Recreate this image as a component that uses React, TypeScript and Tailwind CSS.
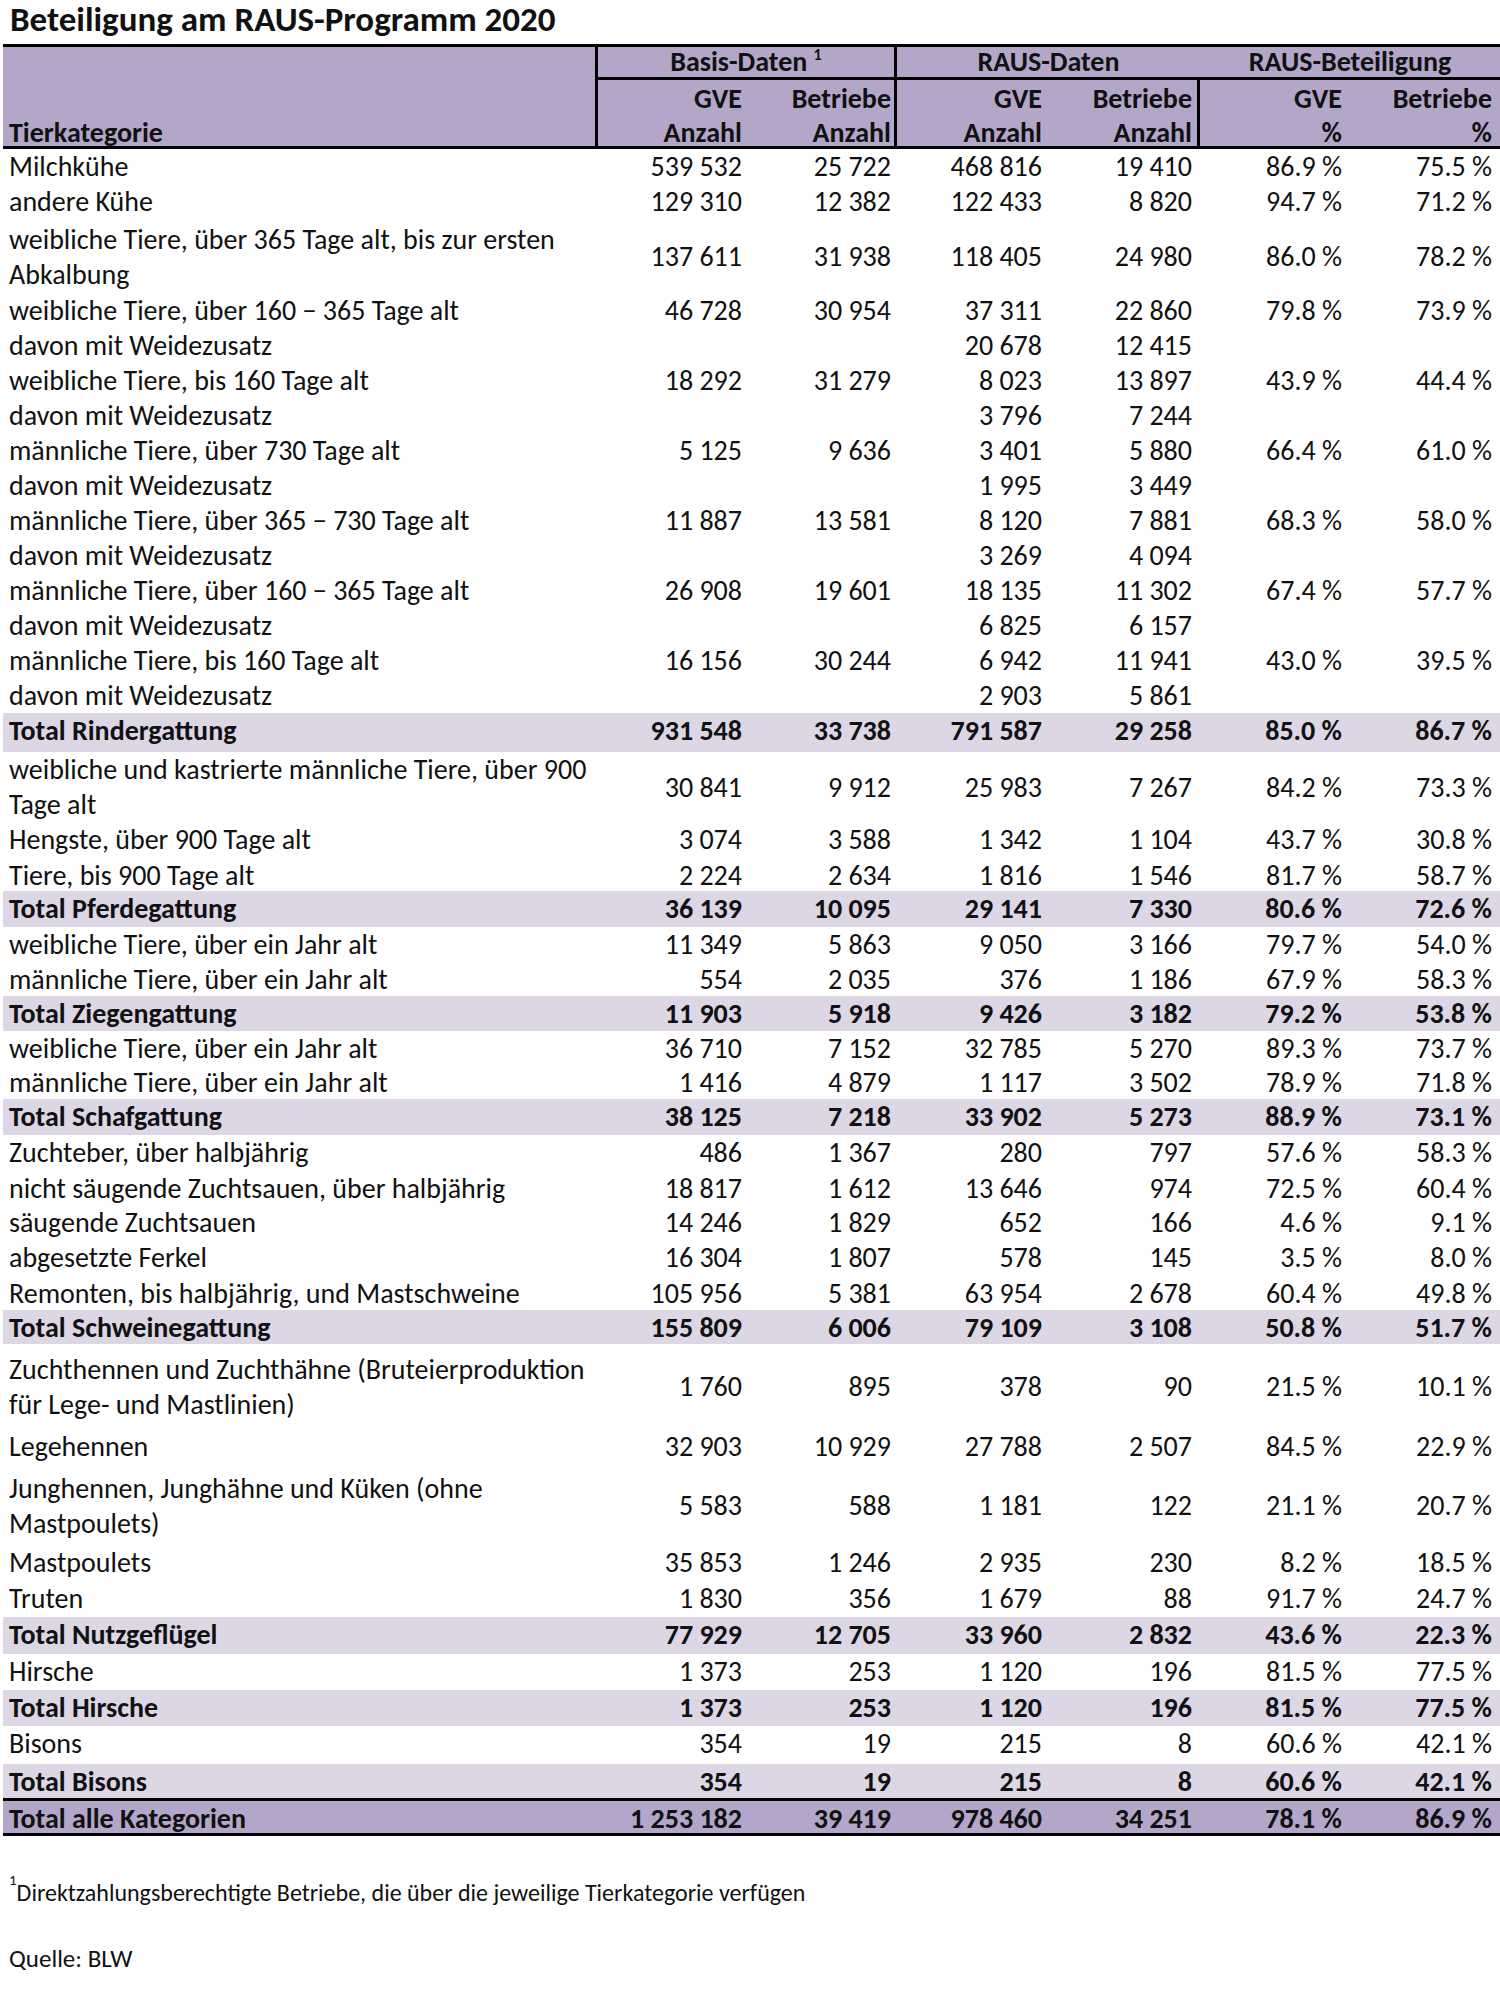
import React from "react"

type Row = {
  label: string
  v: string[]
  kind?: "total" | "grand"
  h?: number
}

const D = "davon mit Weidezusatz"

const rows: Row[] = [
  { label: "Milchkühe", v: ["539 532", "25 722", "468 816", "19 410", "86.9 %", "75.5 %"] },
  { label: "andere Kühe", v: ["129 310", "12 382", "122 433", "8 820", "94.7 %", "71.2 %"], h: 36 },
  { label: "weibliche Tiere, über 365 Tage alt, bis zur ersten\nAbkalbung", v: ["137 611", "31 938", "118 405", "24 980", "86.0 %", "78.2 %"], h: 73 },
  { label: "weibliche Tiere, über 160 − 365 Tage alt", v: ["46 728", "30 954", "37 311", "22 860", "79.8 %", "73.9 %"] },
  { label: D, v: ["", "", "20 678", "12 415", "", ""] },
  { label: "weibliche Tiere, bis 160 Tage alt", v: ["18 292", "31 279", "8 023", "13 897", "43.9 %", "44.4 %"] },
  { label: D, v: ["", "", "3 796", "7 244", "", ""] },
  { label: "männliche Tiere, über 730 Tage alt", v: ["5 125", "9 636", "3 401", "5 880", "66.4 %", "61.0 %"] },
  { label: D, v: ["", "", "1 995", "3 449", "", ""] },
  { label: "männliche Tiere, über 365 − 730 Tage alt", v: ["11 887", "13 581", "8 120", "7 881", "68.3 %", "58.0 %"] },
  { label: D, v: ["", "", "3 269", "4 094", "", ""] },
  { label: "männliche Tiere, über 160 − 365 Tage alt", v: ["26 908", "19 601", "18 135", "11 302", "67.4 %", "57.7 %"] },
  { label: D, v: ["", "", "6 825", "6 157", "", ""] },
  { label: "männliche Tiere, bis 160 Tage alt", v: ["16 156", "30 244", "6 942", "11 941", "43.0 %", "39.5 %"] },
  { label: D, v: ["", "", "2 903", "5 861", "", ""] },
  { label: "Total Rindergattung", v: ["931 548", "33 738", "791 587", "29 258", "85.0 %", "86.7 %"], kind: "total", h: 39 },
  { label: "weibliche und kastrierte männliche Tiere, über 900\nTage alt", v: ["30 841", "9 912", "25 983", "7 267", "84.2 %", "73.3 %"], h: 70 },
  { label: "Hengste, über 900 Tage alt", v: ["3 074", "3 588", "1 342", "1 104", "43.7 %", "30.8 %"], h: 36 },
  { label: "Tiere, bis 900 Tage alt", v: ["2 224", "2 634", "1 816", "1 546", "81.7 %", "58.7 %"], h: 33 },
  { label: "Total Pferdegattung", v: ["36 139", "10 095", "29 141", "7 330", "80.6 %", "72.6 %"], kind: "total", h: 36 },
  { label: "weibliche Tiere, über ein Jahr alt", v: ["11 349", "5 863", "9 050", "3 166", "79.7 %", "54.0 %"] },
  { label: "männliche Tiere, über ein Jahr alt", v: ["554", "2 035", "376", "1 186", "67.9 %", "58.3 %"], h: 34 },
  { label: "Total Ziegengattung", v: ["11 903", "5 918", "9 426", "3 182", "79.2 %", "53.8 %"], kind: "total" },
  { label: "weibliche Tiere, über ein Jahr alt", v: ["36 710", "7 152", "32 785", "5 270", "89.3 %", "73.7 %"], h: 34 },
  { label: "männliche Tiere, über ein Jahr alt", v: ["1 416", "4 879", "1 117", "3 502", "78.9 %", "71.8 %"], h: 34 },
  { label: "Total Schafgattung", v: ["38 125", "7 218", "33 902", "5 273", "88.9 %", "73.1 %"], kind: "total", h: 36 },
  { label: "Zuchteber, über halbjährig", v: ["486", "1 367", "280", "797", "57.6 %", "58.3 %"], h: 36 },
  { label: "nicht säugende Zuchtsauen, über halbjährig", v: ["18 817", "1 612", "13 646", "974", "72.5 %", "60.4 %"], h: 34 },
  { label: "säugende Zuchtsauen", v: ["14 246", "1 829", "652", "166", "4.6 %", "9.1 %"] },
  { label: "abgesetzte Ferkel", v: ["16 304", "1 807", "578", "145", "3.5 %", "8.0 %"], h: 36 },
  { label: "Remonten, bis halbjährig, und Mastschweine", v: ["105 956", "5 381", "63 954", "2 678", "60.4 %", "49.8 %"], h: 34 },
  { label: "Total Schweinegattung", v: ["155 809", "6 006", "79 109", "3 108", "50.8 %", "51.7 %"], kind: "total", h: 34 },
  { label: "Zuchthennen und Zuchthähne (Bruteierproduktion\nfür Lege- und Mastlinien)", v: ["1 760", "895", "378", "90", "21.5 %", "10.1 %"], h: 85 },
  { label: "Legehennen", v: ["32 903", "10 929", "27 788", "2 507", "84.5 %", "22.9 %"], h: 37 },
  { label: "Junghennen, Junghähne und Küken (ohne\nMastpoulets)", v: ["5 583", "588", "1 181", "122", "21.1 %", "20.7 %"], h: 79 },
  { label: "Mastpoulets", v: ["35 853", "1 246", "2 935", "230", "8.2 %", "18.5 %"], h: 36 },
  { label: "Truten", v: ["1 830", "356", "1 679", "88", "91.7 %", "24.7 %"], h: 36 },
  { label: "Total Nutzgeflügel", v: ["77 929", "12 705", "33 960", "2 832", "43.6 %", "22.3 %"], kind: "total", h: 37 },
  { label: "Hirsche", v: ["1 373", "253", "1 120", "196", "81.5 %", "77.5 %"], h: 36 },
  { label: "Total Hirsche", v: ["1 373", "253", "1 120", "196", "81.5 %", "77.5 %"], kind: "total", h: 36 },
  { label: "Bisons", v: ["354", "19", "215", "8", "60.6 %", "42.1 %"], h: 38 },
  { label: "Total Bisons", v: ["354", "19", "215", "8", "60.6 %", "42.1 %"], kind: "total", h: 34 },
  { label: "Total alle Kategorien", v: ["1 253 182", "39 419", "978 460", "34 251", "78.1 %", "86.9 %"], kind: "grand", h: 38 },
]

const grid = "grid grid-cols-[595px_149px_150px_150px_153px_147px_153px]"
// right padding of each number column in the body
const pad = ["pr-[5px]", "pr-[6px]", "pr-[5px]", "pr-[8px]", "pr-[5px]", "pr-[8px]"]

function BodyRow({ r }: { r: Row }) {
  const bg =
    r.kind === "grand"
      ? "bg-[#b3a6c9] border-y-[3px] border-black font-bold"
      : r.kind === "total"
        ? "bg-[#dcd6e5] font-bold"
        : ""
  // single-line rows sit a little above the middle, like the sheet
  const lift = (r.h ?? 35) < 60 ? "pb-[8px]" : ""
  return (
    <div className={`${grid} ${bg}`} style={{ height: r.h ?? 35 }}>
      <div className={`flex items-center whitespace-pre-line pl-[6px] leading-[35px] ${lift}`}>{r.label}</div>
      {r.v.map((x, i) => (
        <div key={i} className={`flex items-center justify-end whitespace-nowrap leading-[35px] ${pad[i]} ${lift}`}>
          {x}
        </div>
      ))}
    </div>
  )
}

export default function App() {
  return (
    <div className="w-[1500px] h-[1995px] bg-white text-[#111] font-[family-name:Carlito,Lato,sans-serif]">
      <h1 className="h-[44px] pl-[10px] text-[35px] font-bold leading-[38px]">
        Beteiligung am RAUS-Programm 2020
      </h1>

      <div className="ml-[3px] text-[28px]">
        {/* header */}
        <div className={`${grid} grid-rows-[33px_34px_32px] border-y-[3px] border-black bg-[#b3a6c9] font-bold`}>
          <div className="row-span-3 flex items-end border-r-[3px] border-black pl-[6px] leading-[27px]">
            Tierkategorie
          </div>
          <div className="col-span-2 flex items-center justify-center border-r-[3px] border-b-[3px] border-black leading-none">
            <span>
              Basis-Daten <sup className="text-[16px] align-[3px]">1</sup>
            </span>
          </div>
          <div className="col-span-2 flex items-center justify-center border-b-[3px] border-black leading-none">
            RAUS-Daten
          </div>
          <div className="col-span-2 flex items-center justify-center border-b-[3px] border-black leading-none">
            RAUS-Beteiligung
          </div>

          <div className="flex items-center justify-end pt-[4px] pr-[5px]">GVE</div>
          <div className="flex items-center justify-end border-r-[3px] border-black pt-[4px] pr-[3px]">Betriebe</div>
          <div className="flex items-center justify-end pt-[4px] pr-[5px]">GVE</div>
          <div className="flex items-center justify-end border-r-[3px] border-black pt-[4px] pr-[5px]">Betriebe</div>
          <div className="flex items-center justify-end pt-[4px] pr-[5px]">GVE</div>
          <div className="flex items-center justify-end pt-[4px] pr-[8px]">Betriebe</div>

          <div className="flex items-center justify-end pt-[6px] pr-[5px]">Anzahl</div>
          <div className="flex items-center justify-end border-r-[3px] border-black pt-[6px] pr-[3px]">Anzahl</div>
          <div className="flex items-center justify-end pt-[6px] pr-[5px]">Anzahl</div>
          <div className="flex items-center justify-end border-r-[3px] border-black pt-[6px] pr-[5px]">Anzahl</div>
          <div className="flex items-center justify-end pt-[6px] pr-[5px]">%</div>
          <div className="flex items-center justify-end pt-[6px] pr-[8px]">%</div>
        </div>

        {rows.map((r, i) => (
          <BodyRow key={i} r={r} />
        ))}
      </div>

      <p className="mt-[42px] pl-[9px] text-[24px] leading-[30px]">
        <sup className="text-[15px] align-[9px]">1</sup>Direktzahlungsberechtigte Betriebe, die über die jeweilige Tierkategorie verfügen
      </p>
      <p className="mt-[36px] pl-[9px] text-[25px] leading-[30px]">Quelle: BLW</p>
    </div>
  )
}
